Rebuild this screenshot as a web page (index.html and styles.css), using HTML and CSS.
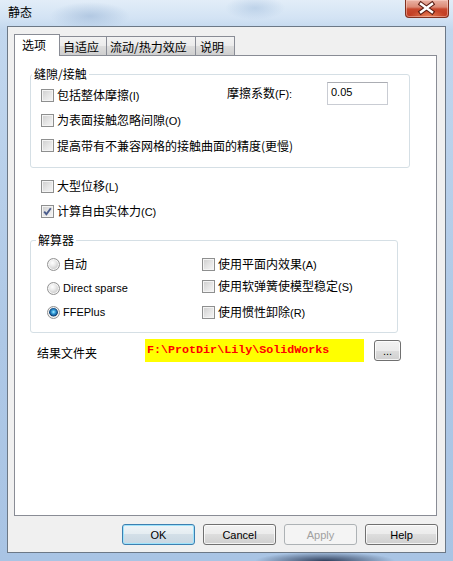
FILE: index.html
```html
<!DOCTYPE html>
<html>
<head>
<meta charset="utf-8">
<link rel="stylesheet" href="styles.css">
</head>
<body>
<div class="window">
  <div class="titlebar">
    <span class="title">静态</span>
    <div class="close">
      <svg width="44" height="18" viewBox="0 0 44 18">
        <path d="M16 5 L27 13 M27 5 L16 13" stroke="#5a1c12" stroke-width="4.6" stroke-linecap="square" fill="none"/>
        <path d="M16 5 L27 13 M27 5 L16 13" stroke="#ffffff" stroke-width="2.4" stroke-linecap="square" fill="none"/>
      </svg>
    </div>
  </div>
  <div class="client">
    <div class="tabs">
      <div class="tab sel t1">选项</div>
      <div class="tab t2">自适应</div>
      <div class="tab t3">流动/热力效应</div>
      <div class="tab t4">说明</div>
    </div>
    <div class="panel">
      <fieldset class="group g1">
        <legend>缝隙/接触</legend>
        <div class="gbody">
          <div class="row r25">
            <div class="item w186"><span class="cb"></span><span>包括整体摩擦<span class="l">(I)</span></span></div>
            <div class="friction">
              <span class="flabel">摩擦系数<span class="l">(F):</span></span>
              <div class="input"><span class="l">0.05</span></div>
            </div>
          </div>
          <div class="row r25">
            <div class="item"><span class="cb"></span><span>为表面接触忽略间隙<span class="l">(O)</span></span></div>
          </div>
          <div class="row r25">
            <div class="item"><span class="cb"></span><span>提高带有不兼容网格的接触曲面的精度(更慢)</span></div>
          </div>
        </div>
      </fieldset>

      <div class="row r25 plain first">
        <div class="item"><span class="cb"></span><span>大型位移<span class="l">(L)</span></span></div>
      </div>
      <div class="row r24 plain">
        <div class="item"><span class="cb checked"><svg width="11" height="11" viewBox="0 0 11 11"><path d="M2.2 5.6 L4.4 8.2 L8.8 2.2" stroke="#4a5c8c" stroke-width="1.9" fill="none"/></svg></span><span>计算自由实体力<span class="l">(C)</span></span></div>
      </div>

      <fieldset class="group g2">
        <legend>解算器</legend>
        <div class="gbody solver">
          <div class="item"><span class="rb"></span><span>自动</span></div>
          <div class="item"><span class="cb"></span><span>使用平面内效果<span class="l">(A)</span></span></div>
          <div class="item"><span class="rb"></span><span class="l">Direct sparse</span></div>
          <div class="item up"><span class="cb"></span><span>使用软弹簧使模型稳定<span class="l">(S)</span></span></div>
          <div class="item"><span class="rb on"></span><span class="l">FFEPlus</span></div>
          <div class="item"><span class="cb"></span><span>使用惯性卸除<span class="l">(R)</span></span></div>
        </div>
      </fieldset>

      <div class="result">
        <span class="rlabel">结果文件夹</span>
        <div class="path">F:\ProtDir\Lily\SolidWorks</div>
        <div class="btn small"><span class="l">...</span></div>
      </div>
    </div>
    <div class="buttons">
      <div class="btn def"><span class="l">OK</span></div>
      <div class="btn"><span class="l">Cancel</span></div>
      <div class="btn dis"><span class="l">Apply</span></div>
      <div class="btn"><span class="l">Help</span></div>
    </div>
  </div>
</div>
</body>
</html>
```

FILE: styles.css
```css
* { box-sizing: border-box; }
html, body { margin: 0; padding: 0; }
body {
  width: 453px;
  height: 561px;
  overflow: hidden;
  font-family: "Noto Sans CJK SC", "Liberation Sans", sans-serif;
  font-size: 12px;
  line-height: 14px;
  color: #000;
}
.l {
  font-family: "Liberation Sans", Arial, sans-serif;
  font-size: 11px;
}

.window {
  width: 453px;
  height: 561px;
  display: flex;
  flex-direction: column;
  background:
    radial-gradient(ellipse 70px 9px at 325px 561px, rgba(35,50,78,0.9), rgba(35,50,78,0) 100%),
    radial-gradient(ellipse 40px 14px at 90px 16px, rgba(150,178,212,0.55), rgba(150,178,212,0) 100%),
    radial-gradient(ellipse 30px 12px at 255px 8px, rgba(160,188,220,0.5), rgba(160,188,220,0) 100%),
    linear-gradient(180deg, #e2edf8 0px, #d3e3f4 18px, #c2d7ee 30px, #aec8e6 60%, #a9c4e4 100%);
}

.titlebar {
  height: 26px;
  display: flex;
  justify-content: space-between;
  align-items: flex-start;
  padding: 0 4px 0 8px;
}
.title {
  padding-top: 5px;
  line-height: 14px;
}
.close {
  width: 44px;
  height: 18px;
  border: 1px solid #80301f;
  border-top: none;
  border-radius: 0 0 4px 4px;
  background:
    radial-gradient(ellipse 18px 6px at 22px 16px, rgba(255,170,120,0.6), rgba(255,170,120,0)),
    linear-gradient(180deg, #eab3a5 0px, #dc8a76 7px, #c8482e 9px, #c03a20 17px);
  box-shadow: inset 0 0 0 1px rgba(255,220,210,0.45);
}
.close svg { display: block; margin-top: -1px; margin-left: -1px; }

.client {
  margin: 0 7px;
  border: 1px solid #6c7886;
  background: #f0f0f0;
  padding: 7px 8px 7px 6px;
  display: flex;
  flex-direction: column;
}

.tabs {
  height: 21px;
  display: flex;
  align-items: flex-end;
}
.tab {
  border: 1px solid #898c95;
  border-bottom: none;
  height: 19px;
  padding-top: 3px;
  padding-left: 3px;
  margin-left: -1px;
  background: linear-gradient(180deg, #f3f3f3 0%, #ebebeb 50%, #dddddd 50%, #cfcfcf 100%);
  white-space: nowrap;
}
.tab.sel {
  position: relative;
  z-index: 2;
  height: 22px;
  margin-bottom: -1px;
  margin-left: 0;
  padding-left: 7px;
  background: #fff;
}
.t1 { width: 46px; }
.t2 { width: 48px; }
.t3 { width: 90px; }
.t4 { width: 40px; padding-left: 4px; }

.panel {
  height: 461px;
  border: 1px solid #898c95;
  background: #fff;
  padding: 11px 0 0 15px;
}

.group {
  margin: 0;
  padding: 0;
  min-width: 0;
  border: 1px solid #d5dfe5;
  border-radius: 3px;
}
.group legend {
  padding: 0 2px;
  line-height: 14px;
}
.g1 { width: 380px; }
.g1 legend { margin-left: 1px; }
.g2 { width: 368px; margin-top: 10px; }
.g2 legend { margin-left: 5px; }

.gbody { padding: 2px 0 9px 10px; }

.row {
  display: flex;
  align-items: center;
}
.r25 { height: 25px; }
.r24 { height: 24px; }
.plain { padding-left: 11px; }
.first { margin-top: 6px; }

.item {
  display: flex;
  align-items: center;
  gap: 3px;
  white-space: nowrap;
}
.w186 { width: 186px; }

.friction {
  display: flex;
  align-items: center;
  margin-bottom: 4px;
}
.flabel { width: 100px; }
.input {
  width: 61px;
  height: 23px;
  border: 1px solid #c9ccd3;
  border-top-color: #abadb3;
  background: #fff;
  padding: 1px 0 0 3px;
}

.cb {
  width: 13px;
  height: 13px;
  flex: none;
  border: 1px solid #8e8f8f;
  background: linear-gradient(135deg, #cdcdcd 0%, #e6e6e6 55%, #f6f6f6 100%);
  box-shadow: inset 0 0 0 1px #f4f4f4;
  position: relative;
}
.cb svg { display: block; }

.rb {
  width: 13px;
  height: 13px;
  flex: none;
  border-radius: 50%;
  border: 1px solid #939393;
  background: radial-gradient(circle at 40% 35%, #ffffff 0px, #ececec 3px, #d2d2d2 6px);
  box-shadow: inset 0 0 0 1px #f6f6f6;
}
.rb.on {
  background:
    radial-gradient(circle at 50% 45%, #b5ecff 0px, #44b0e6 1.5px, #17609f 3.4px, #0e3f6e 4.2px, rgba(14,63,110,0) 4.8px),
    radial-gradient(circle at 40% 35%, #ffffff 0px, #ececec 3px, #d2d2d2 6px);
}

.solver {
  display: grid;
  grid-template-columns: 155px 1fr;
  grid-auto-rows: 24px;
  align-items: center;
  padding: 5px 0 8px 16px;
}
.up { margin-top: -3px; }

.result {
  margin-top: 6px;
  height: 23px;
  display: flex;
  align-items: center;
}
.rlabel {
  width: 115px;
  padding-left: 7px;
  margin-top: 4px;
}
.path {
  width: 219px;
  height: 23px;
  background: #ffff00;
  color: #ff0000;
  font-family: "Liberation Mono", "Courier New", monospace;
  font-weight: bold;
  font-size: 11.7px;
  line-height: 14px;
  padding: 4px 0 0 2px;
  white-space: nowrap;
}

.btn {
  width: 73px;
  height: 21px;
  border: 1px solid #707070;
  border-radius: 3px;
  background: linear-gradient(180deg, #f2f2f2 0%, #ebebeb 50%, #dddddd 50%, #cfcfcf 100%);
  box-shadow: inset 0 0 0 1px rgba(255,255,255,0.75);
  display: flex;
  align-items: center;
  justify-content: center;
}
.btn.small {
  width: 27px;
  margin-left: 10px;
}
.btn.def {
  border-color: #3c7fb1;
  box-shadow: inset 0 0 0 1px #9fe3fb;
  background: linear-gradient(180deg, #eef4f8 0%, #e4ecf1 50%, #d3dfe8 50%, #c9d7e2 100%);
}
.btn.dis {
  border-color: #adb2b5;
  background: #f4f4f4;
  box-shadow: none;
  color: #a0a0a0;
}
.buttons {
  display: flex;
  justify-content: flex-end;
  gap: 8px;
  margin-top: 8px;
  margin-right: -1px;
}
```
